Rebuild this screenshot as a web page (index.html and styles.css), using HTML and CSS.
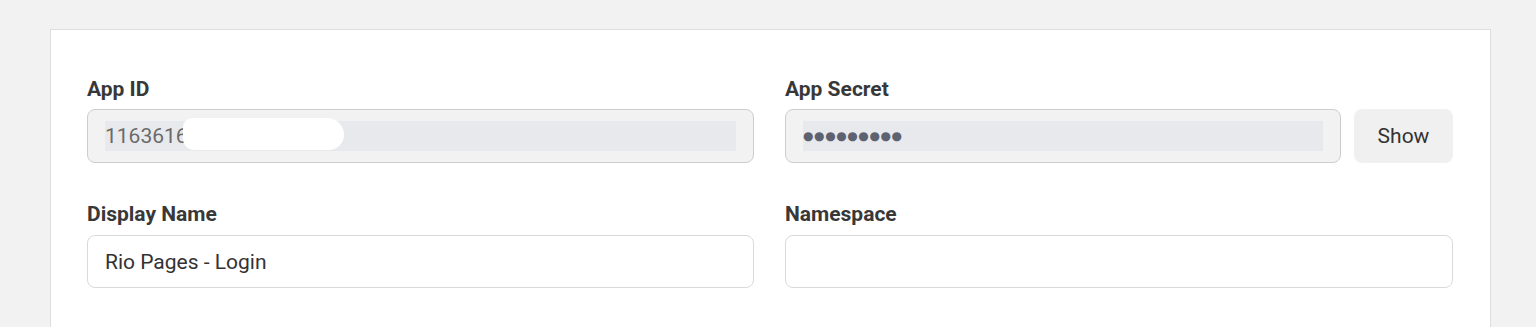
FILE: index.html
```html
<!DOCTYPE html>
<html lang="en">
<head>
    <meta charset="UTF-8">
    <meta name="viewport" content="width=device-width, initial-scale=1.0">
    <title>App Settings</title>
    <link rel="stylesheet" href="styles.css">
</head>
<body>
    <main class="page">
        <section class="settings-card">
            <div class="form-grid">
                <div class="form-group">
                    <label for="appId">App ID</label>
                    <div class="field field-disabled" id="appId">
                        <span class="field-value">1163616</span>
                        <span class="redact"></span>
                    </div>
                </div>
                <div class="form-group">
                    <label for="appSecret">App Secret</label>
                    <div class="field-row">
                        <div class="field field-disabled" id="appSecret">
                            <span class="field-value secret">●●●●●●●●●</span>
                        </div>
                        <button type="button" class="btn-show">Show</button>
                    </div>
                </div>
                <div class="form-group">
                    <label for="displayName">Display Name</label>
                    <input type="text" id="displayName" class="field" value="Rio Pages - Login">
                </div>
                <div class="form-group">
                    <label for="namespace">Namespace</label>
                    <input type="text" id="namespace" class="field" value="">
                </div>
            </div>
        </section>
    </main>
</body>
</html>
```

FILE: styles.css
```css
/* Base */
:root {
    --text-color: #333333;
    --muted-color: #6a6a6a;
    --border-color: #dadada;
    --border-radius: 8px;
}

* {
    margin: 0;
    padding: 0;
    box-sizing: border-box;
    font-family: Roboto, 'Liberation Sans', Arial, sans-serif;
}

body {
    background-color: #f2f2f2;
    color: var(--text-color);
}

.page {
    padding: 29px 45px 0 50px;
}

/* Card */
.settings-card {
    background-color: #ffffff;
    border: 1px solid #dedede;
    border-bottom: none;
    padding: 47px 37px 39px 36px;
}

.form-grid {
    display: grid;
    grid-template-columns: 667px 1fr;
    column-gap: 31px;
    row-gap: 39px;
}

.form-group label {
    display: block;
    font-size: 21px;
    line-height: 24px;
    font-weight: 700;
    color: #383838;
    margin-bottom: 8px;
}

.form-group:nth-child(n+3) label {
    margin-bottom: 9px;
}

/* Fields */
.field {
    display: block;
    width: 100%;
    height: 54px;
    padding: 0 17px;
    border: 1px solid var(--border-color);
    border-radius: var(--border-radius);
    background-color: #ffffff;
    font-size: 21px;
    color: var(--text-color);
    outline: none;
}

input.field {
    height: 53px;
}

.field-disabled {
    position: relative;
    background-color: #f2f2f2;
    border-color: #cdcdcd;
    padding: 11px 17px;
}

.field-value {
    display: block;
    height: 30px;
    line-height: 30px;
    background-color: #e8e9ed;
    color: var(--muted-color);
    font-size: 21px;
}

.field-value.secret {
    font-family: 'DejaVu Sans', sans-serif;
    font-size: 12px;
    letter-spacing: 0.6px;
    color: #5d6270;
}

.redact {
    position: absolute;
    left: 95px;
    top: 8px;
    width: 161px;
    height: 32px;
    background-color: #ffffff;
    border-radius: 10px 18px 16px 12px;
}

.field-row {
    display: flex;
    gap: 13px;
}

.field-row .field {
    flex: 1;
}

/* Buttons */
.btn-show {
    width: 99px;
    height: 54px;
    border: none;
    border-radius: var(--border-radius);
    background-color: #f0f0f0;
    color: var(--text-color);
    font-size: 21px;
    cursor: pointer;
}
```
